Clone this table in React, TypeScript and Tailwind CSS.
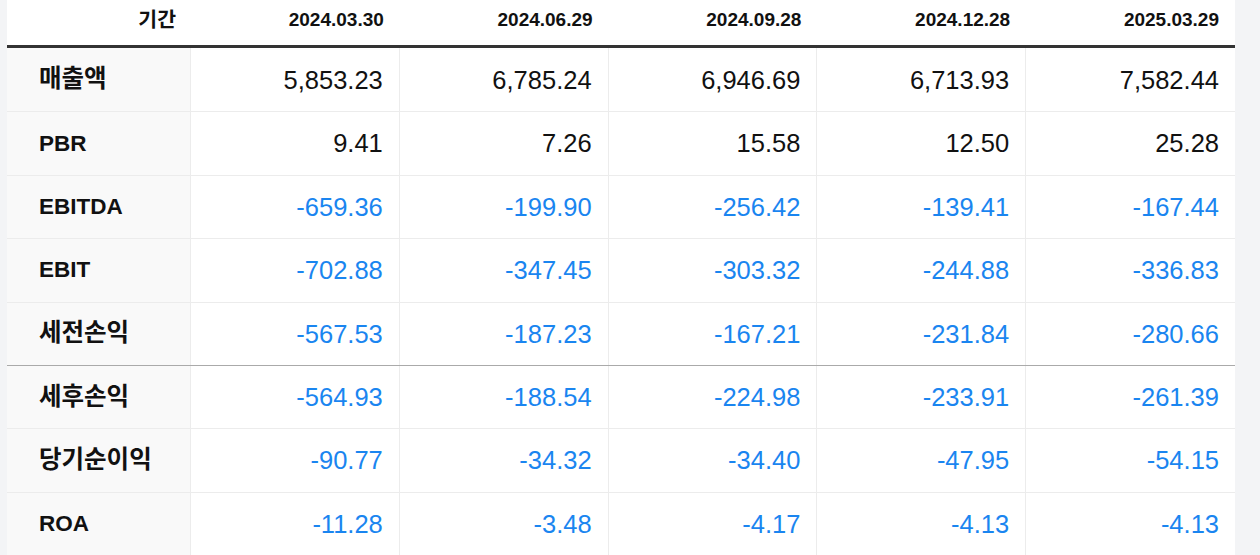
const dates = ["2024.03.30", "2024.06.29", "2024.09.28", "2024.12.28", "2025.03.29"];

const rows: { label: string; values: string[]; ko?: boolean; split?: boolean }[] = [
  { label: "매출액", ko: true, values: ["5,853.23", "6,785.24", "6,946.69", "6,713.93", "7,582.44"] },
  { label: "PBR", values: ["9.41", "7.26", "15.58", "12.50", "25.28"] },
  { label: "EBITDA", values: ["-659.36", "-199.90", "-256.42", "-139.41", "-167.44"] },
  { label: "EBIT", values: ["-702.88", "-347.45", "-303.32", "-244.88", "-336.83"] },
  { label: "세전손익", ko: true, values: ["-567.53", "-187.23", "-167.21", "-231.84", "-280.66"] },
  { label: "세후손익", ko: true, values: ["-564.93", "-188.54", "-224.98", "-233.91", "-261.39"], split: true },
  { label: "당기순이익", ko: true, values: ["-90.77", "-34.32", "-34.40", "-47.95", "-54.15"] },
  { label: "ROA", values: ["-11.28", "-3.48", "-4.17", "-4.13", "-4.13"] },
];

export default function App() {
  return (
    <div className="w-[1260px] h-[555px] overflow-hidden bg-[#f3f4f6] pl-[7px] font-['Liberation_Sans','Noto_Sans_CJK_KR',sans-serif] text-[#111]">
      <div className="w-[1228px] h-full bg-white">
        {/* header */}
        <div className="grid grid-cols-[184px_repeat(5,1fr)] h-[48px] border-b-[3px] border-[#333] text-[19px] font-bold">
          <div className="flex items-center justify-end pr-[15px] pb-[4px] text-[20.5px]">기간</div>
          {dates.map((d) => (
            <div key={d} className="flex items-center justify-end pr-4 pb-[4px]">
              {d}
            </div>
          ))}
        </div>

        {rows.map((r, i) => (
          <div
            key={r.label}
            className={
              "grid grid-cols-[184px_repeat(5,1fr)] h-[63.4px] " +
              (i === 0 ? "" : r.split ? "border-t border-[#aaa]" : "border-t border-[#ececec]")
            }
          >
            <div
              className={
                "flex items-center pl-[32px] bg-[#f9f9f9] border-r border-[#ececec] font-bold " +
                (r.ko ? "text-[24.5px]" : "text-[22.5px]")
              }
            >
              {r.label}
            </div>
            {r.values.map((v, j) => (
              <div
                key={j}
                className={
                  "flex items-center justify-end pr-4 text-[25.5px] " +
                  (j < 4 ? "border-r border-[#ececec] " : "") +
                  (v.startsWith("-") ? "text-[#1a85f0]" : "text-[#111]")
                }
              >
                {v}
              </div>
            ))}
          </div>
        ))}
      </div>
    </div>
  );
}
